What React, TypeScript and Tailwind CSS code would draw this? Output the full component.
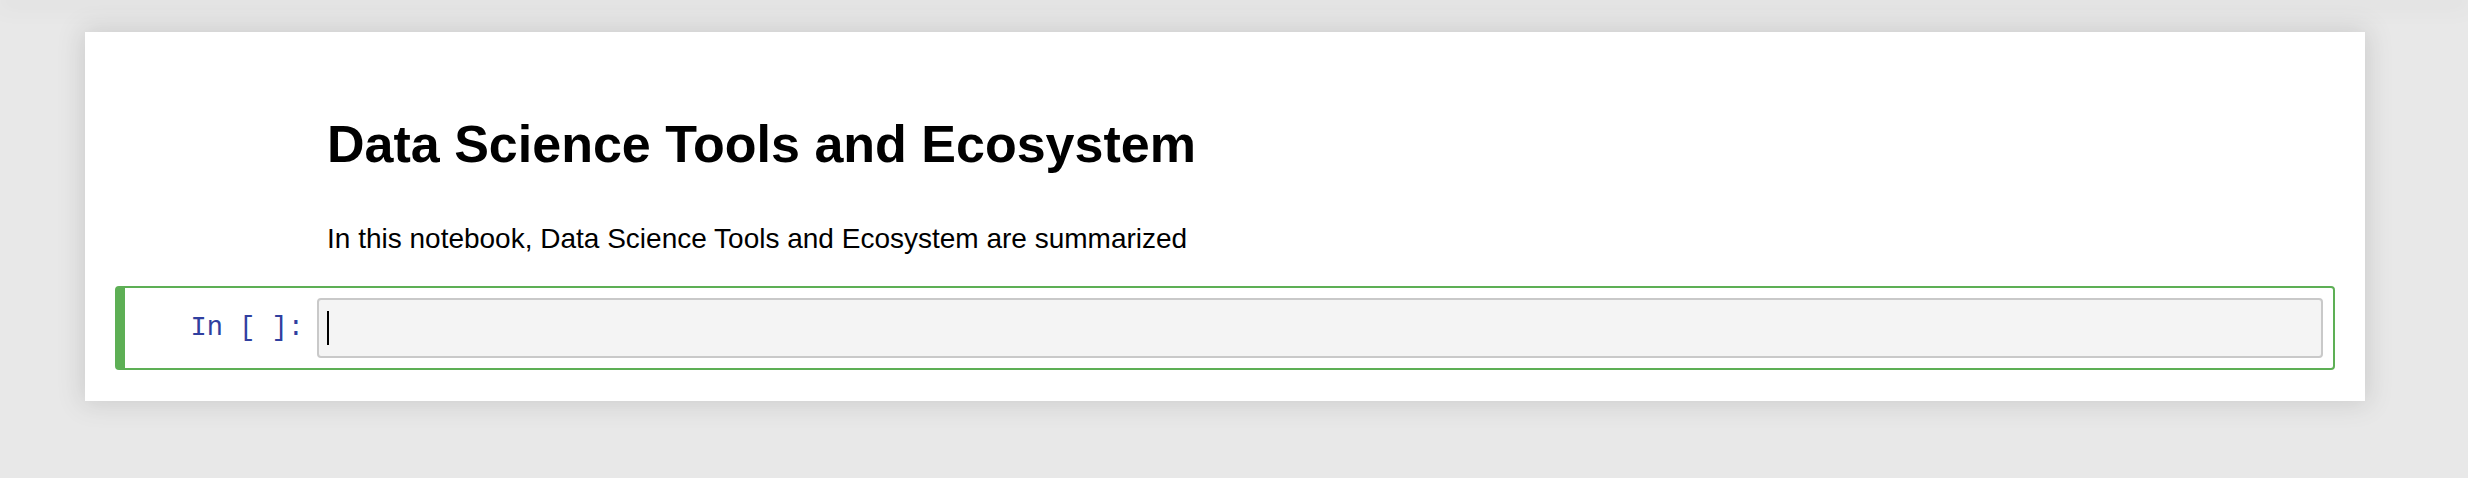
import React from "react";

const App = () => {
  return (
    <div className="min-h-[478px] w-full overflow-hidden bg-[#e8e8e8] font-['Liberation_Sans',Arial,sans-serif]">
      {/* header sits above the viewport, only its shadow shows */}
      <div className="h-0 w-full shadow-[0_0_24px_2px_rgba(87,87,87,0.2)]" />
      <div className="ml-[85px] mt-[32px] w-[2280px] bg-white px-[30px] pb-[31px] pt-[86px] shadow-[0_0_24px_2px_rgba(87,87,87,0.2)]">
        <TextCell />
        <CodeCell />
      </div>
    </div>
  );
};

export default App;

const TextCell = () => {
  return (
    <div className="pl-[212px] text-black">
      <h1 className="text-[52px] font-bold leading-[52px]">
        Data Science Tools and Ecosystem
      </h1>
      <p className="mt-[55px] text-[28px] leading-[28px]">
        In this notebook, Data Science Tools and Ecosystem are summarized
      </p>
    </div>
  );
};

const CodeCell = () => {
  return (
    <div className="mt-[33px] flex items-center rounded-[4px] border-2 border-l-[10px] border-[#5daf55] py-[10px] pr-[10px]">
      <div className="w-[179px] text-right font-['Liberation_Mono','Courier_New',monospace] text-[27px] leading-[27px] text-[#303f9f]">
        In&nbsp;[&nbsp;]:
      </div>
      <div className="ml-[13px] flex h-[60px] flex-1 items-center rounded-[4px] border-2 border-[#c9c9c9] bg-[#f4f4f4] pl-[8px]">
        <div className="h-[34px] w-[2px] bg-black" />
      </div>
    </div>
  );
};
